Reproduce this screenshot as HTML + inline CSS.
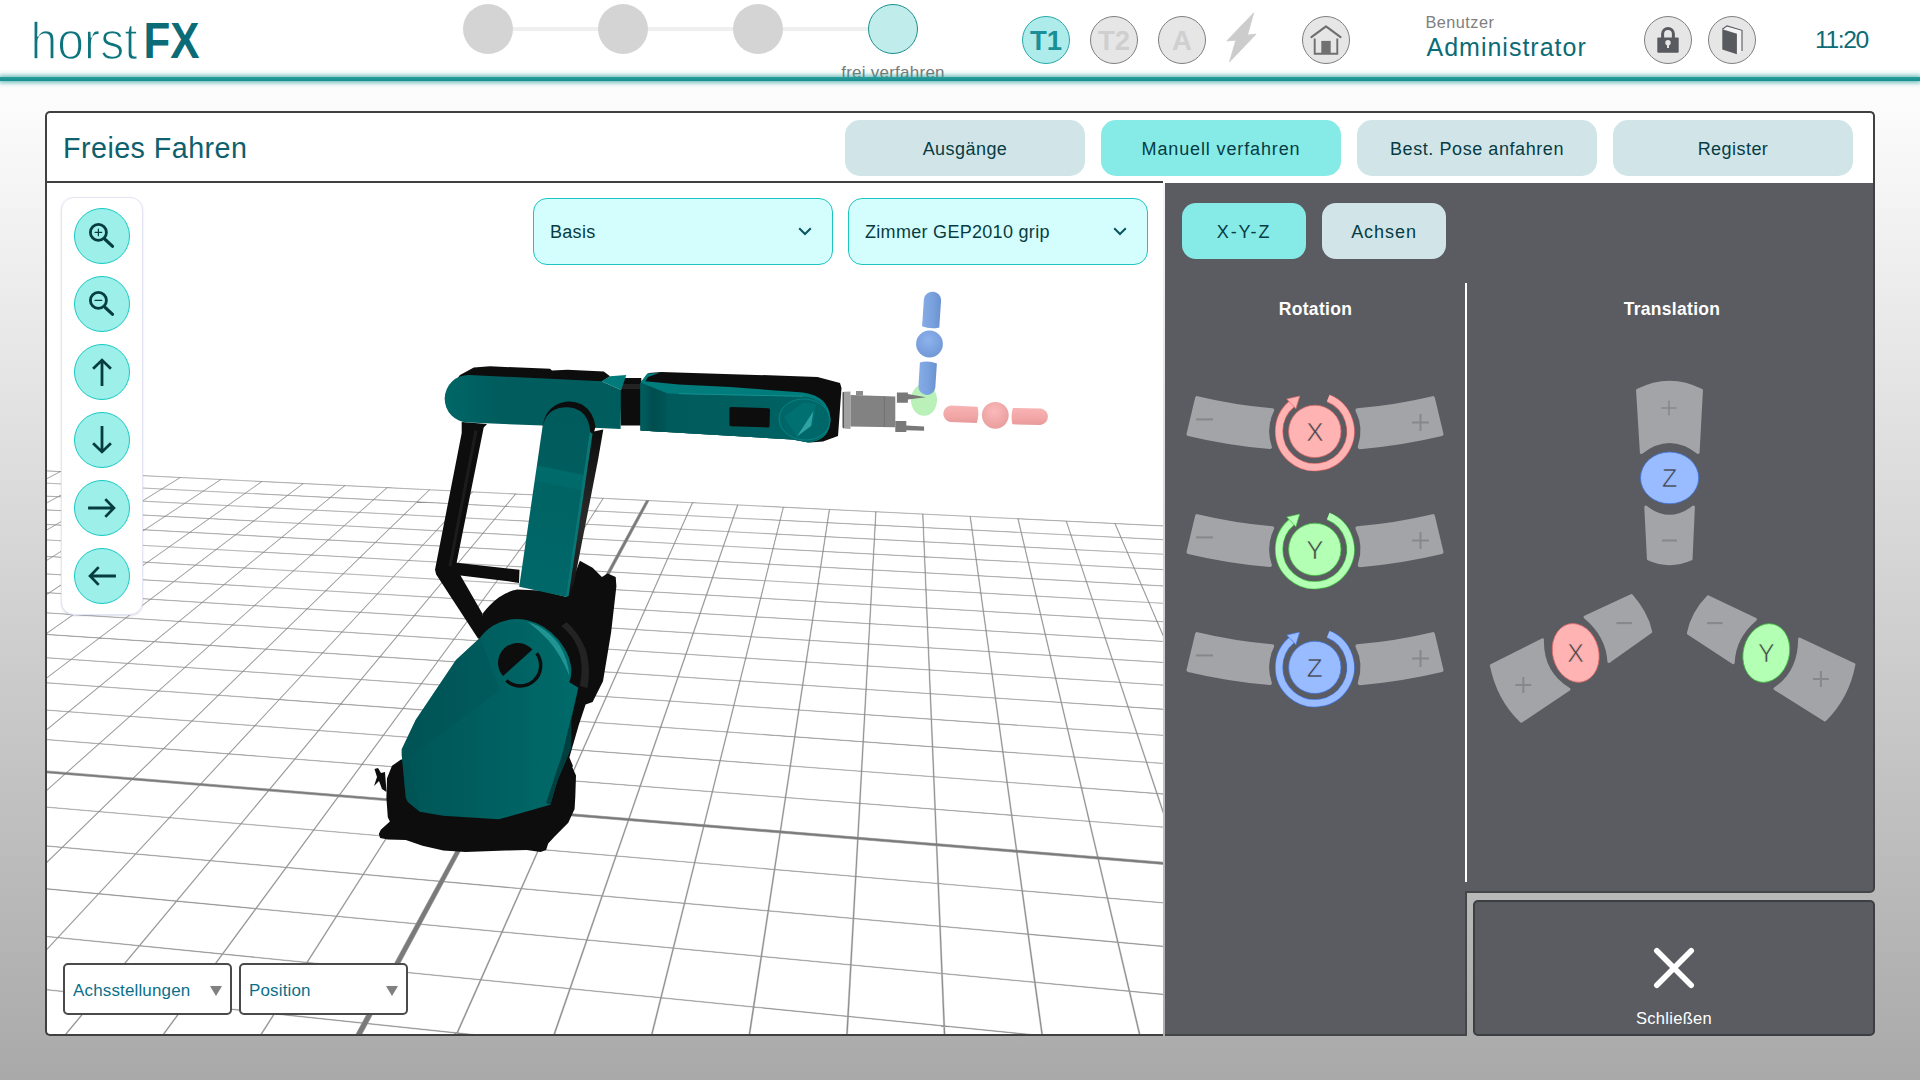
<!DOCTYPE html>
<html lang="de"><head><meta charset="utf-8"><title>horstFX</title><style>
*{box-sizing:border-box;margin:0;padding:0}
html,body{width:1920px;height:1080px;overflow:hidden}
body{font-family:"Liberation Sans",sans-serif;background:linear-gradient(#ffffff 0,#fdfdfd 90px,#a9a9a9 1080px);position:relative}
.abs{position:absolute}
#hdr{position:absolute;left:0;top:0;width:1920px;height:78px;background:#fff}
#hline{position:absolute;left:0;top:77px;width:1920px;height:4px;background:linear-gradient(#2a9d9d,#178f8f);box-shadow:0 0 5px 1.5px rgba(27,149,149,.7)}
.step{position:absolute;top:4px;width:50px;height:50px;border-radius:50%;background:#d4d4d4}
.circ{position:absolute;top:16px;width:48px;height:48px;border-radius:50%;background:#e6e6e6;border:1.2px solid #808080}
.tbtn{position:absolute;top:120px;width:240px;height:56px;border-radius:15px;background:#d1e5e8;color:#063c44;font-size:18px;text-align:center;line-height:58px}
.tbtn.on{background:#86ebe7}
.dd{position:absolute;top:198px;width:300px;height:67px;border-radius:14px;background:#d4fefd;border:1px solid #1cc5c0;color:#083c44;font-size:18px;line-height:67px;padding-left:16px;letter-spacing:.3px}
.zb{position:absolute;left:74px;width:56px;height:56px;border-radius:50%;background:#9df0ea;border:1px solid #14c9c3}
.sel{position:absolute;top:963px;width:169px;height:52px;border:2px solid #4a4a4a;border-radius:5px;background:#fff;color:#0c6f8a;font-size:17px;line-height:51px;padding-left:8.5px;letter-spacing:.15px}
.sel i{position:absolute;right:8px;top:21px;width:0;height:0;border-left:6.5px solid transparent;border-right:6.5px solid transparent;border-top:10px solid #808080}
.mbtn{position:absolute;top:203px;width:124px;height:56px;border-radius:14px;background:#d1e5e8;color:#063c44;font-size:18px;text-align:center;line-height:58px;letter-spacing:.5px}
.mbtn.on{background:#86ebe7}
.lbl{position:absolute;color:#fff;font-weight:bold;font-size:17.5px;letter-spacing:.3px;text-align:center;width:200px}
</style></head><body>
<div id="hdr"></div>
<svg class="abs" style="left:0;top:0" width="230" height="76" viewBox="0 0 230 76"><text x="30.6" y="58.5" font-family="Liberation Sans, sans-serif" font-size="51" fill="#0d737d" stroke="#fff" stroke-width="1.45" textLength="107" lengthAdjust="spacingAndGlyphs">horst</text><text x="143.6" y="58.3" font-family="Liberation Sans, sans-serif" font-weight="bold" font-size="50.3" fill="#0b6b76" textLength="56" lengthAdjust="spacingAndGlyphs">FX</text></svg>
<div class="abs" style="left:488px;top:27px;width:405px;height:4px;background:#efefef"></div>
<div class="step" style="left:463px"></div>
<div class="step" style="left:598px"></div>
<div class="step" style="left:733px"></div>
<div class="step" style="left:868px;background:#c0ecec;border:1px solid #1b8e8e"></div>
<div class="abs" style="left:793px;top:62.5px;width:200px;text-align:center;font-size:17px;color:#7a7a7a;letter-spacing:.25px">frei verfahren</div>
<div id="hline"></div>
<div class="circ" style="left:1022px;background:#aeeceb;border-color:#2aa8a8;color:#1b8f97;font-weight:bold;font-size:27.5px;text-align:center;line-height:47px">T1</div>
<div class="circ" style="left:1090px;color:#cfcfcf;font-weight:bold;font-size:27.5px;text-align:center;line-height:47px">T2</div>
<div class="circ" style="left:1158px;color:#cfcfcf;font-weight:bold;font-size:27.5px;text-align:center;line-height:47px">A</div>
<svg class="abs" style="left:1220px;top:8px" width="44" height="60" viewBox="1220 8 44 60"><path d="M1253.75,12.8 L1247.5,35.1 L1256.1,34.1 L1229.5,62 L1235.8,40.2 L1226.8,40.9 Z" fill="#cccccc" stroke="#cccccc" stroke-width=".8" stroke-linejoin="round"/></svg>
<div class="circ" style="left:1302px"></div>
<svg class="abs" style="left:1302px;top:16px" width="48" height="48" viewBox="0 0 48 48"><path d="M9.4,21.2 L24,10.3 L38.6,21.2" fill="none" stroke="#6f6f6f" stroke-width="2.1" stroke-linecap="round" stroke-linejoin="round"/><path d="M12.7,22.6 V37.8 H35.3 V22.6" fill="none" stroke="#6f6f6f" stroke-width="1.9"/><rect x="19.3" y="24.9" width="9.4" height="12.5" fill="#707070"/></svg>
<div class="abs" style="left:1425.5px;top:13px;font-size:16.3px;color:#808080;letter-spacing:.45px">Benutzer</div>
<div class="abs" style="left:1426.5px;top:32.5px;font-size:25px;color:#0b6b76;letter-spacing:1px">Administrator</div>
<div class="circ" style="left:1644px"></div>
<svg class="abs" style="left:1644px;top:16px" width="48" height="48" viewBox="0 0 48 48"><path d="M18.6,23 V17.8 a5.4,5.4 0 0 1 10.8,0 V23" fill="none" stroke="#595a60" stroke-width="3"/><rect x="13.3" y="21.4" width="21.4" height="15.3" rx="1" fill="#595a60"/><circle cx="24" cy="26.8" r="2.7" fill="#e6e6e6"/><rect x="23" y="27" width="2" height="5" fill="#e6e6e6"/></svg>
<div class="circ" style="left:1708px"></div>
<svg class="abs" style="left:1708px;top:16px" width="48" height="48" viewBox="0 0 48 48"><path d="M14.3,13.3 L19,9.9 L34,14.3 V35 L28.9,38.3 V17.7 Z" fill="#f2f2f2"/><path d="M14.3,13.3 L28.9,17.7 V38.3 L14.3,33.6 Z" fill="#595a60"/><path d="M14.3,13.3 L19,9.9 L34,14.3 V35" fill="none" stroke="#595a60" stroke-width="1.1"/></svg>
<div class="abs" style="left:1815px;top:26px;font-size:24.6px;color:#0b6b76;letter-spacing:-1.4px">11:20</div>
<div class="abs" style="left:45px;top:111px;width:1830px;height:72px;background:#fff;border:2px solid #404040;border-bottom:none;border-radius:5px 5px 0 0"></div>
<div class="abs" style="left:63px;top:131.5px;font-size:28.7px;color:#0e606c;letter-spacing:.45px">Freies Fahren</div>
<div class="tbtn" style="left:845px;letter-spacing:0.45px">Ausgänge</div>
<div class="tbtn on" style="left:1101px;letter-spacing:0.87px">Manuell verfahren</div>
<div class="tbtn" style="left:1357px;letter-spacing:0.57px">Best. Pose anfahren</div>
<div class="tbtn" style="left:1613px;letter-spacing:0.45px">Register</div>
<div class="abs" style="left:45px;top:181px;width:1118px;height:855px;background:#fff;border:2px solid #404040;border-right:none;border-radius:0 0 0 5px;overflow:hidden">
<svg class="abs" style="left:0;top:0" width="1116" height="851" viewBox="47 183 1116 851">
<path d="M-2472.2,1715.1 3922.9,3333.2 3916.1,3325.6 -2468.3,1713.1ZM-2181.5,1569.9 3453.5,2819.7 3448.6,2814.3 -2178.2,1568.2ZM-1936.9,1447.7 3110.4,2444.3 3106.7,2440.3 -1934.1,1446.3ZM-1728.2,1343.5 2848.6,2158.0 2845.8,2154.9 -1725.8,1342.3ZM-1548.2,1253.5 2642.4,1932.4 2640.1,1929.9 -1546.1,1252.5ZM-1391.1,1175.1 2475.6,1750.0 2473.8,1748.0 -1389.3,1174.2ZM-1253.0,1106.1 2338.0,1599.5 2336.5,1597.8 -1251.4,1105.3ZM-1130.6,1044.9 2222.6,1473.2 2221.3,1471.8 -1129.2,1044.2ZM-1021.4,990.4 2124.3,1365.7 2123.2,1364.5 -1020.1,989.7ZM-923.2,941.3 2039.7,1273.2 2038.7,1272.1 -922.1,940.8ZM-834.6,897.1 1966.0,1192.6 1965.2,1191.6 -833.6,896.6ZM-754.3,856.9 1901.3,1121.8 1900.6,1121.0 -753.3,856.5ZM-681.0,820.3 1844.0,1059.1 1843.4,1058.4 -680.1,819.9ZM-613.9,786.8 1793.0,1003.3 1792.4,1002.6 -613.1,786.4ZM-552.3,756.0 1747.1,953.1 1746.6,952.6 -551.5,755.7ZM-442.9,701.4 1668.3,866.9 1667.9,866.5 -442.3,701.1ZM-394.2,677.1 1634.2,829.6 1633.8,829.2 -393.6,676.8ZM-348.9,654.4 1603.0,795.4 1602.6,795.0 -348.3,654.1ZM-306.6,633.3 1574.3,764.1 1574.0,763.7 -306.1,633.1ZM-267.1,613.6 1547.9,735.2 1547.6,734.9 -266.6,613.3ZM-230.1,595.1 1523.5,708.5 1523.2,708.2 -229.6,594.9ZM-195.3,577.7 1500.9,683.7 1500.6,683.4 -194.9,577.5ZM-162.7,561.4 1479.8,660.7 1479.6,660.5 -162.3,561.2ZM-131.9,546.0 1460.2,639.3 1460.0,639.0 -131.5,545.9ZM-102.8,531.5 1441.9,619.2 1441.7,619.0 -102.5,531.4ZM-75.4,517.8 1424.7,600.5 1424.5,600.2 -75.1,517.6ZM-49.4,504.8 1408.6,582.9 1408.4,582.6 -49.1,504.7ZM-24.7,492.5 1393.5,566.3 1393.3,566.1 -24.4,492.4ZM-1.3,480.8 1379.2,550.7 1379.1,550.5 -1.0,480.7ZM20.9,469.7 1365.8,536.0 1365.6,535.8 21.2,469.6ZM-2470.9,1713.9 20.8,469.6 21.3,469.6 -2469.6,1714.3ZM-2360.0,1742.0 60.1,471.5 60.6,471.6 -2358.6,1742.3ZM-2245.3,1771.0 99.7,473.5 100.2,473.5 -2243.8,1771.3ZM-2126.7,1801.0 139.7,475.5 140.2,475.5 -2125.2,1801.3ZM-2004.0,1832.0 180.0,477.5 180.5,477.5 -2002.4,1832.4ZM-1876.9,1864.1 220.6,479.5 221.1,479.5 -1875.3,1864.5ZM-1745.3,1897.4 261.6,481.5 262.1,481.5 -1743.6,1897.8ZM-1608.9,1931.9 303.0,483.5 303.5,483.5 -1607.1,1932.3ZM-1467.3,1967.7 344.7,485.6 345.2,485.6 -1465.5,1968.1ZM-1320.4,2004.8 386.8,487.7 387.3,487.7 -1318.5,2005.3ZM-1167.7,2043.4 429.3,489.7 429.8,489.8 -1165.8,2043.9ZM-1009.1,2083.5 472.1,491.9 472.6,491.9 -1007.0,2084.0ZM-844.0,2125.2 515.3,494.0 515.9,494.0 -841.9,2125.8ZM-672.1,2168.7 559.0,496.1 559.5,496.2 -669.9,2169.2ZM-493.0,2214.0 603.0,498.3 603.5,498.3 -490.7,2214.5ZM-111.2,2310.5 692.2,502.7 692.8,502.7 -108.7,2311.1ZM92.6,2362.0 737.4,504.9 738.0,505.0 95.2,2362.6ZM305.7,2415.9 783.1,507.2 783.6,507.2 308.4,2416.5ZM528.9,2472.3 829.1,509.5 829.7,509.5 531.7,2473.0ZM762.7,2531.4 875.6,511.7 876.2,511.8 765.7,2532.1ZM1008.1,2593.4 922.5,514.1 923.1,514.1 1011.3,2594.2ZM1266.0,2658.6 969.9,516.4 970.5,516.4 1269.2,2659.4ZM1537.2,2727.2 1017.7,518.7 1018.3,518.8 1540.6,2728.0ZM1822.8,2799.4 1066.0,521.1 1066.6,521.2 1826.4,2800.3ZM2124.1,2875.5 1114.7,523.5 1115.3,523.6 2127.9,2876.5ZM2442.3,2956.0 1163.9,525.9 1164.5,526.0 2446.4,2957.0ZM2778.9,3041.1 1213.5,528.4 1214.1,528.4 2783.2,3042.2ZM3135.7,3131.2 1263.7,530.9 1264.3,530.9 3140.2,3132.4ZM3514.3,3227.0 1314.3,533.4 1314.9,533.4 3519.1,3228.2ZM3916.9,3328.7 1365.4,535.9 1366.0,535.9 3922.1,3330.0Z" fill="#8e8e8e" stroke="#8e8e8e" stroke-width=".4"/><path d="M-496.8,728.3 1706.8,909.0 1704.4,906.4 -493.5,726.7ZM-310.7,2260.0 646.3,500.4 649.0,500.6 -299.3,2262.9Z" fill="#7a7a7a" stroke="#8a8a8a" stroke-width=".6"/>
<defs><linearGradient id="tb" gradientUnits="userSpaceOnUse" x1="400" y1="0" x2="585" y2="0"><stop offset="0" stop-color="#005556"/><stop offset=".35" stop-color="#005c5d"/><stop offset="1" stop-color="#006c6b"/></linearGradient><linearGradient id="ta" gradientUnits="userSpaceOnUse" x1="445" y1="0" x2="622" y2="0"><stop offset="0" stop-color="#006667"/><stop offset=".3" stop-color="#005c5d"/><stop offset="1" stop-color="#005d5e"/></linearGradient><linearGradient id="tu" gradientUnits="userSpaceOnUse" x1="570" y1="407" x2="532" y2="597"><stop offset="0" stop-color="#005b5c"/><stop offset=".325" stop-color="#005d5e"/><stop offset=".335" stop-color="#006b6c"/><stop offset=".405" stop-color="#00696a"/><stop offset=".415" stop-color="#006364"/><stop offset="1" stop-color="#006869"/></linearGradient><linearGradient id="t2" gradientUnits="userSpaceOnUse" x1="665" y1="0" x2="830" y2="0"><stop offset="0" stop-color="#005a5b"/><stop offset="1" stop-color="#006465"/></linearGradient><linearGradient id="t2l" gradientUnits="userSpaceOnUse" x1="640" y1="0" x2="666" y2="0"><stop offset="0" stop-color="#005f60"/><stop offset=".5" stop-color="#004e4f"/><stop offset="1" stop-color="#005556"/></linearGradient><linearGradient id="bs" gradientUnits="userSpaceOnUse" x1="600" y1="430" x2="570" y2="590"><stop offset="0" stop-color="#0d0d0d"/><stop offset=".6" stop-color="#2c2c2c"/><stop offset="1" stop-color="#141414"/></linearGradient></defs>
<path d="M401,759.6 L392,765.8 L387,778.3 L386.4,797.8 L387.8,817.2 L389.9,821.4 L380.8,829.7 L378.8,833.9 L380.1,838 L387.8,839.4 L405.8,840.1 L422.5,845.7 L443.3,850.6 L465.6,851.9 L505.8,850.6 L526.7,849.9 L540.6,851.9 L546.1,849.9 L548.2,843.6 L554.4,836.7 L568.3,822.8 L574.6,808.9 L575.3,796.4 L576,775.6 L571.1,764.4 L566.9,761.7 Z" fill="#0d0d0d"/>
<path d="M374.5,769 L378,768 L381,773 L385,772 L386.5,792 L382,789 L379,781 L374,786 L377,777 Z" fill="#0d0d0d"/>
<path d="M478,638 L482.5,613.7 Q490,604 498.7,597.5 Q508,591 517.2,589.4 L540.4,590.6 L566,596.7 L579.9,560.8 L592.6,567.8 L601.9,577 L607.6,573.6 L615.7,577 L616.4,586.3 L611.1,632.6 L603,681.2 L592.6,702 L585.6,704.4 L578.7,725.2 L569.4,757.6 L573,766 L555,790 L540,700 Z" fill="#0d0d0d"/>
<path d="M566.7,622.2 Q579,633 586,650 Q591,668 587.5,688 L580,686 Q584,664 578,648 Q572,634 561,626 Z" fill="#232323"/>
<path d="M480,637.8 Q486,630 493.3,625.6 Q501,621 510,619.4 Q518,618.5 526.7,620 Q535,622 543.3,626.7 Q551,631.5 557.8,638.9 Q563,645 566.7,652.2 Q570,659 571.1,666.7 Q572,675 569.4,682.2 L578.3,687.8 L575.6,700 L571.1,720 L571.1,747.8 L557.2,781.1 L550.3,804.7 L498.9,819.3 L443.3,815.8 L419.7,811.7 L407.9,801.9 L405.8,797.8 L401.7,754.7 L401.7,749.2 L415.6,720 L455.9,660 Z" fill="url(#tb)"/>
<path d="M401.7,749.2 L415.6,720 L455.9,660 L480,637.8 L500,690 Q455,725 408,757 L420,811.8 L419.7,811.7 L407.9,801.9 L405.8,797.8 L401.7,754.7 Z" fill="#005152" fill-opacity=".3"/>
<path d="M578.3,687.8 L575.6,700 L571.1,720 L571.1,747.8 L557.2,781.1 L550.3,804.7 L546,803 L562,755 Z" fill="#003f40"/>
<path d="M528,622 Q548,628 560,646 Q568,660 569.5,676 Q561,655 549,641 Q540,631 528,622 Z" fill="#35b0b0" fill-opacity=".6"/>
<g transform="translate(517.8,662.8) rotate(-42)"><path d="M-19.8,0 A19.8,19.8 0 0 1 19.8,0 Z" fill="#0d0d0d"/><path d="M20.4,5.6 A20.5,20.5 0 0 1 -20.4,5.6" fill="none" stroke="#0d0d0d" stroke-width="3.4"/></g>
<path d="M461.7,422 L487.1,424 L483.7,427.4 L456.6,562.8 L519.5,569.7 L519,583 L508,581.3 L460.5,575.5 L482.5,613.7 L481,636 L478,638.5 L436.2,574.4 L435,569.7 L461.7,433 Z" fill="#0d0d0d"/>
<path d="M474.5,430 L448.5,566 L451.5,566.3 L477.5,431 Z" fill="#1c1c1c"/>
<path d="M591,432 L603.3,429.5 L598,460 L573.3,586.7 L567,597 Z" fill="url(#bs)"/>
<path d="M453,384 L460,375 L473.8,367.5 L490,366.3 L550,368.8 L552,370.6 L567.5,369.8 L603.8,371.5 L610,376.3 L601.3,382 L465,376 Z" fill="#0d0d0d"/>
<path d="M469,375 L601.3,381.3 L621.3,390 L620.6,429 L543,425.6 L468,422.6 A23.8,23.8 0 0 1 469,375 Z" fill="url(#ta)"/>
<path d="M542.5,426 Q545,411.5 555,405.5 Q568.5,398 582,404.5 Q593.5,411.5 595.5,427 L592.5,437 L590,432 Z" fill="#0d0d0d"/>
<path d="M542.5,427 Q545.5,411.5 559.5,408 Q571.5,405.5 581,411.5 Q589.5,418 590.4,433 L566.7,597 L519.2,586.7 Z" fill="url(#tu)"/>
<path d="M589.7,433 L592.6,433.5 L568.6,596 L566,597 Z" fill="#0a7777"/>
<rect x="620.8" y="378" width="20.5" height="47.5" fill="#0d0d0d"/>
<rect x="622" y="384" width="19" height="5" fill="#232323"/>
<path d="M601.3,381.3 L610,376.3 L626.3,375 L621.3,390 Z" fill="#007a7b"/>
<path d="M640.6,382.5 L648.8,373.1 L661.3,371.9 L817.5,376.9 L840,383.1 L841.5,388 L838,436 L823,441.5 L810,442.5 L792.5,439.4 L640.6,430.6 Z" fill="#0d0d0d"/>
<path d="M640.6,382.5 L647.2,373.6 L659,373 L648,377 L645.3,381.2 L679,384.5 L730,387 L803,392.5 Q829,396 830.5,419 Q830,441 808,442.5 L792.5,439.4 L640.6,430.6 Z" fill="#007c7d"/>
<path d="M640.6,382.8 L666.7,393.2 L679,394 L803,396.8 Q827,399 828.5,419.5 Q828,440 808,442.5 L792.5,439.4 L640.6,430.6 Z" fill="url(#t2)"/>
<path d="M640.6,382.8 L666.7,393.2 L665.8,432 L640.6,430.6 Z" fill="url(#t2l)"/>
<path d="M679,393.7 L803,396.3" stroke="#1f9b9b" stroke-width=".8" stroke-opacity=".8"/>
<ellipse cx="804.5" cy="419.5" rx="25.5" ry="20.5" transform="rotate(5 804.5 419.5)" fill="#006768" stroke="#0a8586" stroke-width="0.9"/>
<path d="M784,417 L803,402.5 L816,404 L813,425 L797,436.5 Z" fill="#007071"/><path d="M813.5,411 L811,426 L797,436.5 Z" fill="#2fa3a3"/>
<path d="M731,407 L768.5,408.2 Q770,408.3 770,410 L769.5,426 Q769.4,427.6 768,427.5 L731,426.3 Q729.4,426.2 729.4,424.8 L729.4,408.5 Q729.5,407 731,407 Z" fill="#0d0d0d"/>
<path d="M842.6,392.5 L844,391.7 L850.5,391.5 L850.5,429 L844,428.5 L842.6,427.5 Z" fill="#a0a0a0"/>
<path d="M842.6,392.5 L844,391.7 L844,428.5 L842.6,427.5 Z" fill="#555"/>
<rect x="856" y="391" width="7" height="4.5" fill="#8d8d8d"/>
<path d="M850.5,394.9 L895.3,396.5 L895.3,427.2 L850.5,426.4 Z" fill="#828282"/>
<path d="M884.3,396 L884.3,427" stroke="#6a6a6a" stroke-width="0.7"/>
<ellipse cx="924" cy="400" rx="13" ry="15.8" fill="#b9f1b9"/>
<path d="M896.9,392.5 L907.9,392.5 L907.9,394.1 L926,397.2 L907.9,399.6 L907.9,402.8 L896.9,402.8 Z" fill="#787878"/>
<path d="M895.3,420.9 L906.3,420.9 L906.3,425.6 L924.1,426.4 L924.1,430.8 L906.3,430.3 L906.3,431.9 L895.3,431.9 Z" fill="#787878"/>
<defs><linearGradient id="gb" x1="0" x2="1"><stop offset="0" stop-color="#86ace6"/><stop offset=".5" stop-color="#7aa2de"/><stop offset="1" stop-color="#6b92cf"/></linearGradient><linearGradient id="gp" x1="0" x2="0" y1="0" y2="1"><stop offset="0" stop-color="#f8b4b4"/><stop offset=".6" stop-color="#f2a6a6"/><stop offset="1" stop-color="#e79a9a"/></linearGradient><radialGradient id="sb" cx=".45" cy=".35" r=".7"><stop offset="0" stop-color="#8db3ee"/><stop offset="1" stop-color="#6f97d4"/></radialGradient><radialGradient id="sp" cx=".45" cy=".35" r=".7"><stop offset="0" stop-color="#fbb9b9"/><stop offset="1" stop-color="#e89c9c"/></radialGradient></defs>
<path d="M923.9,299 A8.65,8.65 0 0 1 941.1,300.2 L939.3,327.4 Q930.6,329.6 922.1,326.2 Z" fill="url(#gb)"/>
<circle cx="929.5" cy="344" r="13.4" fill="url(#sb)"/>
<path d="M919.9,362.5 Q928.4,360.3 936.9,363.5 L935.3,387.7 A8.5,8.5 0 0 1 918.4,386.7 Z" fill="url(#gb)"/>
<path d="M951.1,405.5 L977.6,406.7 Q979.4,414.9 976.8,423.1 L950.3,421.9 A8.25,8.25 0 0 1 951.1,405.5 Z" fill="url(#gp)"/>
<circle cx="995.3" cy="415.3" r="13.4" fill="url(#sp)"/>
<path d="M1012.8,407.9 L1040.7,408.5 A8.25,8.25 0 0 1 1040.4,424.9 L1012.4,424.3 Q1010.6,416.1 1012.8,407.9 Z" fill="url(#gp)"/>
</svg></div>
<div class="abs" style="left:61px;top:197px;width:82px;height:418px;background:#fff;border:1px solid #e4e6f4;border-radius:13px;box-shadow:0 1px 2px rgba(120,120,180,.25)"></div>
<div class="zb" style="top:208px"></div>
<div class="zb" style="top:276px"></div>
<div class="zb" style="top:344px"></div>
<div class="zb" style="top:412px"></div>
<div class="zb" style="top:480px"></div>
<div class="zb" style="top:548px"></div>
<svg class="abs" style="left:61px;top:197px" width="82" height="418" viewBox="61 197 82 418"><circle cx="98.4" cy="232.4" r="8" fill="none" stroke="#063c42" stroke-width="2.8"/><path d="M105.2,239.5 L112.6,246.3" stroke="#063c42" stroke-width="3.1" stroke-linecap="round"/><path d="M95.1,232.4 H101.7" stroke="#063c42" stroke-width="1.2" stroke-linecap="round"/><path d="M98.4,229.1 V235.7" stroke="#063c42" stroke-width="1.2" stroke-linecap="round"/><circle cx="98.4" cy="300.4" r="8" fill="none" stroke="#063c42" stroke-width="2.8"/><path d="M105.2,307.5 L112.6,314.3" stroke="#063c42" stroke-width="3.1" stroke-linecap="round"/><path d="M95.1,300.4 H101.7" stroke="#063c42" stroke-width="1.2" stroke-linecap="round"/><g transform="translate(102,372) rotate(0)"><path d="M-8.9,-3.3 L0,-11.9 L8.9,-3.3 M0,-11.9 V13.9" fill="none" stroke="#063c42" stroke-width="2.8" stroke-linejoin="miter"/></g><g transform="translate(102,440) rotate(180)"><path d="M-8.9,-3.3 L0,-11.9 L8.9,-3.3 M0,-11.9 V13.9" fill="none" stroke="#063c42" stroke-width="2.8" stroke-linejoin="miter"/></g><g transform="translate(102,508) rotate(90)"><path d="M-8.9,-3.3 L0,-11.9 L8.9,-3.3 M0,-11.9 V13.9" fill="none" stroke="#063c42" stroke-width="2.8" stroke-linejoin="miter"/></g><g transform="translate(102,576) rotate(270)"><path d="M-8.9,-3.3 L0,-11.9 L8.9,-3.3 M0,-11.9 V13.9" fill="none" stroke="#063c42" stroke-width="2.8" stroke-linejoin="miter"/></g></svg>
<div class="dd" style="left:533px">Basis<svg class="abs" style="right:19.5px;top:26px" width="16" height="12" viewBox="0 0 16 12"><path d="M2.2,3.2 L8,9 L13.8,3.2" fill="none" stroke="#0a5560" stroke-width="2"/></svg></div>
<div class="dd" style="left:848px">Zimmer GEP2010 grip<svg class="abs" style="right:19.5px;top:26px" width="16" height="12" viewBox="0 0 16 12"><path d="M2.2,3.2 L8,9 L13.8,3.2" fill="none" stroke="#0a5560" stroke-width="2"/></svg></div>
<div class="sel" style="left:62.5px">Achsstellungen<i></i></div>
<div class="sel" style="left:238.5px">Position<i></i></div>
<div class="abs" style="left:1165px;top:183px;width:710px;height:710px;background:#5b5c62;border-right:2px solid #404040;border-bottom:2px solid #444547;border-radius:0 0 5px 0"></div>
<div class="abs" style="left:1165px;top:183px;width:302px;height:853px;background:#5b5c62;border-bottom:2px solid #444547;border-right:2px solid #444547"></div>
<div class="abs" style="left:1165px;top:183px;width:706px;height:708px;background:#5b5c62"></div>
<div class="abs" style="left:1473px;top:900px;width:402px;height:136px;background:#5b5c62;border:2px solid #3d3e41;border-radius:5px"></div>
<svg class="abs" style="left:1648px;top:942px" width="52" height="52" viewBox="0 0 52 52"><path d="M8.8,8.8 L43.2,43.2 M43.2,8.8 L8.8,43.2" stroke="#fff" stroke-width="5.6" stroke-linecap="round"/></svg>
<div class="abs" style="left:1574px;top:1009px;width:200px;text-align:center;color:#fff;font-size:16.5px;letter-spacing:.3px">Schließen</div>
<div class="mbtn on" style="left:1182px;letter-spacing:1.8px">X-Y-Z</div>
<div class="mbtn" style="left:1322px;letter-spacing:.95px">Achsen</div>
<div class="abs" style="left:1465px;top:283px;width:2px;height:599px;background:#fff"></div>
<div class="lbl" style="left:1215.5px;top:299px">Rotation</div>
<div class="lbl" style="left:1572px;top:299px">Translation</div>
<svg class="abs" style="left:1165px;top:183px" width="708" height="709" viewBox="1165 183 708 709"><path d="M1197.1,398.1 A507,507 0 0 0 1272.2,410.2 A47.6,47.6 0 0 0 1269.9,447.1 A544,544 0 0 1 1188.5,434.1 Z" fill="#a3a4a8" stroke="#a3a4a8" stroke-width="4" stroke-linejoin="round"/><path d="M1432.9,398.1 A507,507 0 0 1 1357.4,410.2 A47.6,47.6 0 0 1 1359.7,447.2 A544,544 0 0 0 1441.5,434.1 Z" fill="#a3a4a8" stroke="#a3a4a8" stroke-width="4" stroke-linejoin="round"/><path d="M1196,419.4 H1213" stroke="#87888c" stroke-width="2.1"/><path d="M1412,422.4 H1429 M1420.5,413.9 V430.9" stroke="#87888c" stroke-width="2"/><path d="M1291.79,403.98 A35.8,35.8 0 1 0 1328.21,398.21" fill="none" stroke="#e06868" stroke-width="8.2"/><path d="M1291.79,403.98 A35.8,35.8 0 1 0 1328.21,398.21" fill="none" stroke="#ffb3b3" stroke-width="6.8"/><path d="M1286.7,399.0 L1299.8,396.0 L1295.9,408.7 Z" fill="#ffb3b3" stroke="#e06868" stroke-width=".7"/><circle cx="1314.8" cy="431.4" r="26.2" fill="#ffb3b3" stroke="#e06868" stroke-width=".8"/><path d="M1197.1,516.1 A507,507 0 0 0 1272.2,528.2 A47.6,47.6 0 0 0 1269.9,565.1 A544,544 0 0 1 1188.5,552.1 Z" fill="#a3a4a8" stroke="#a3a4a8" stroke-width="4" stroke-linejoin="round"/><path d="M1432.9,516.1 A507,507 0 0 1 1357.4,528.2 A47.6,47.6 0 0 1 1359.7,565.2 A544,544 0 0 0 1441.5,552.1 Z" fill="#a3a4a8" stroke="#a3a4a8" stroke-width="4" stroke-linejoin="round"/><path d="M1196,537.4 H1213" stroke="#87888c" stroke-width="2.1"/><path d="M1412,540.4 H1429 M1420.5,531.9 V548.9" stroke="#87888c" stroke-width="2"/><path d="M1291.79,521.98 A35.8,35.8 0 1 0 1328.21,516.21" fill="none" stroke="#3fc03f" stroke-width="8.2"/><path d="M1291.79,521.98 A35.8,35.8 0 1 0 1328.21,516.21" fill="none" stroke="#b3ffb3" stroke-width="6.8"/><path d="M1286.7,517.0 L1299.8,514.0 L1295.9,526.7 Z" fill="#b3ffb3" stroke="#3fc03f" stroke-width=".7"/><circle cx="1314.8" cy="549.4" r="26.2" fill="#b3ffb3" stroke="#3fc03f" stroke-width=".8"/><path d="M1197.1,634.1 A507,507 0 0 0 1272.2,646.2 A47.6,47.6 0 0 0 1269.9,683.1 A544,544 0 0 1 1188.5,670.1 Z" fill="#a3a4a8" stroke="#a3a4a8" stroke-width="4" stroke-linejoin="round"/><path d="M1432.9,634.1 A507,507 0 0 1 1357.4,646.2 A47.6,47.6 0 0 1 1359.7,683.2 A544,544 0 0 0 1441.5,670.1 Z" fill="#a3a4a8" stroke="#a3a4a8" stroke-width="4" stroke-linejoin="round"/><path d="M1196,655.4 H1213" stroke="#87888c" stroke-width="2.1"/><path d="M1412,658.4 H1429 M1420.5,649.9 V666.9" stroke="#87888c" stroke-width="2"/><path d="M1291.79,639.98 A35.8,35.8 0 1 0 1328.21,634.21" fill="none" stroke="#3f74e0" stroke-width="8.2"/><path d="M1291.79,639.98 A35.8,35.8 0 1 0 1328.21,634.21" fill="none" stroke="#99bbff" stroke-width="6.8"/><path d="M1286.7,635.0 L1299.8,632.0 L1295.9,644.7 Z" fill="#99bbff" stroke="#3f74e0" stroke-width=".7"/><circle cx="1314.8" cy="667.4" r="26.2" fill="#99bbff" stroke="#3f74e0" stroke-width=".8"/><text x="1314.8" y="440.8" text-anchor="middle" font-family="Liberation Sans, sans-serif" font-size="26" fill="#444548" stroke="#ffb3b3" stroke-width=".55">X</text><text x="1314.8" y="558.8" text-anchor="middle" font-family="Liberation Sans, sans-serif" font-size="26" fill="#444548" stroke="#b3ffb3" stroke-width=".55">Y</text><text x="1314.8" y="676.8" text-anchor="middle" font-family="Liberation Sans, sans-serif" font-size="26" fill="#444548" stroke="#99bbff" stroke-width=".55">Z</text><path d="M1636,389.5 Q1669.5,372.5 1703,389.5 L1699.5,454 Q1669.5,431 1640,454 Z" transform="translate(1669.50,413.25) scale(0.9552,0.9632) translate(-1669.50,-413.25)" fill="#a3a4a8" stroke="#a3a4a8" stroke-width="3" stroke-linejoin="round"/><path d="M1644.2,505.5 Q1669.5,525 1695,505.5 L1692.5,560 Q1669.5,570 1647,560 Z" transform="translate(1669.60,537.75) scale(0.9409,0.9535) translate(-1669.60,-537.75)" fill="#a3a4a8" stroke="#a3a4a8" stroke-width="3" stroke-linejoin="round"/><ellipse cx="1669.6" cy="477.9" rx="29.1" ry="25.9" fill="#99bbff" stroke="#3f74e0" stroke-width=".8"/><path d="M1661.5,408 H1676.5 M1669,400.5 V415.5" stroke="#87888c" stroke-width="1.6"/><path d="M1662,540.5 H1677" stroke="#87888c" stroke-width="2.1"/><text x="1669.6" y="486.8" text-anchor="middle" font-family="Liberation Sans, sans-serif" font-size="25" fill="#444548" stroke="#99bbff" stroke-width=".55">Z</text><path d="M1489.8,665 L1543,638.2 Q1542,672 1570.5,689.5 L1520.8,722.8 Q1497,700 1489.8,665 Z" transform="translate(1530.15,680.50) scale(0.9628,0.9645) translate(-1530.15,-680.50)" fill="#a3a4a8" stroke="#a3a4a8" stroke-width="3" stroke-linejoin="round"/><path d="M1583.5,616.5 L1632,594 Q1648,612 1652.3,631.9 L1608.4,663 Q1607,636 1583.5,616.5 Z" transform="translate(1617.90,628.50) scale(0.9564,0.9565) translate(-1617.90,-628.50)" fill="#a3a4a8" stroke="#a3a4a8" stroke-width="3" stroke-linejoin="round"/><ellipse cx="1575.7" cy="652.9" rx="23" ry="29.7" transform="rotate(-14.2 1575.7 652.9)" fill="#ffb3b3" stroke="#e06868" stroke-width=".8"/><path d="M1515.3,684.9 H1531.3 M1523.3,676.9 V692.9" stroke="#87888c" stroke-width="2"/><path d="M1616.5,623.1 H1632" stroke="#87888c" stroke-width="2.1"/><text x="1575.7" y="661.5" text-anchor="middle" font-family="Liberation Sans, sans-serif" font-size="25" fill="#444548" stroke="#ffb3b3" stroke-width=".55">X</text><path d="M1707.5,595.3 L1757,618.9 Q1734.5,638 1733.8,664.3 L1686.8,633.5 Q1691,612 1707.5,595.3 Z" transform="translate(1721.90,629.80) scale(0.9573,0.9565) translate(-1721.90,-629.80)" fill="#a3a4a8" stroke="#a3a4a8" stroke-width="3" stroke-linejoin="round"/><path d="M1799,637.5 L1855.5,663.9 Q1849,698 1825.3,721.5 L1773.5,689 Q1799,672 1799,637.5 Z" transform="translate(1814.50,679.50) scale(0.9634,0.9643) translate(-1814.50,-679.50)" fill="#a3a4a8" stroke="#a3a4a8" stroke-width="3" stroke-linejoin="round"/><ellipse cx="1766.3" cy="653" rx="23" ry="29.7" transform="rotate(14.2 1766.3 653)" fill="#b3ffb3" stroke="#3fc03f" stroke-width=".8"/><path d="M1812.9,679 H1828.9 M1820.9,671 V687" stroke="#87888c" stroke-width="2"/><path d="M1707,623.1 H1722.5" stroke="#87888c" stroke-width="2.1"/><text x="1766.3" y="661.5" text-anchor="middle" font-family="Liberation Sans, sans-serif" font-size="25" fill="#444548" stroke="#b3ffb3" stroke-width=".55">Y</text></svg>
</body></html>
